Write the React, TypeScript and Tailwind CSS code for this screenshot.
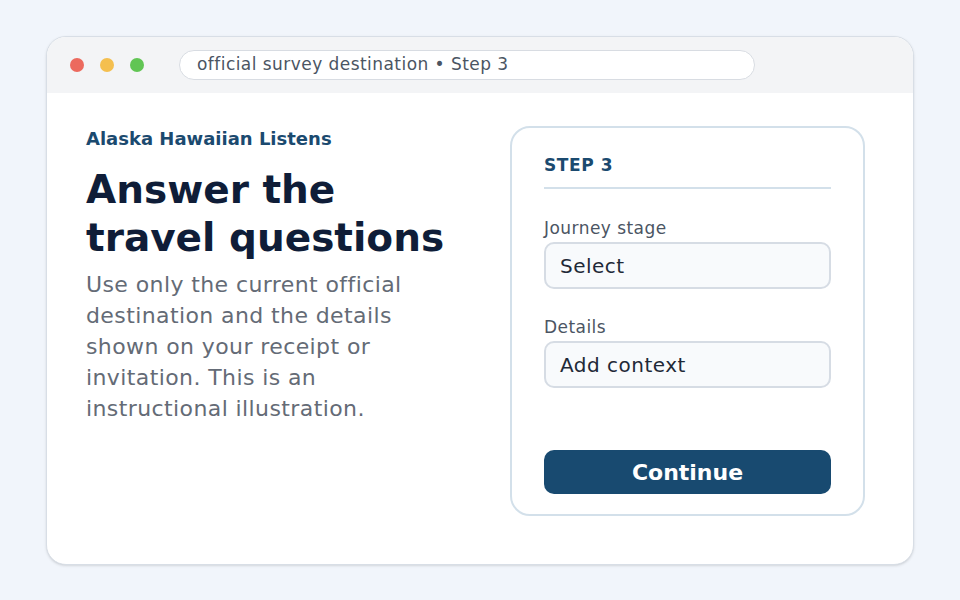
import { useState } from 'react';

const font = { fontFamily: '"DejaVu Sans", "Liberation Sans", sans-serif' };

function WindowDots() {
  return (
    <div className="flex items-center gap-4">
      <span className="h-3.5 w-3.5 rounded-full bg-[#ec6a5e]" />
      <span className="h-3.5 w-3.5 rounded-full bg-[#f4bf4f]" />
      <span className="h-3.5 w-3.5 rounded-full bg-[#61c554]" />
    </div>
  );
}

function Field({ label, value }: { label: string; value: string }) {
  return (
    <div className="flex flex-col gap-[4px]">
      <label className="text-[17px] leading-5 tracking-[0.45px] text-[#4b5563]">{label}</label>
      <div className="flex h-[47px] items-center rounded-[10px] border-2 border-[#d6dce4] bg-[#f8fafc] px-[14px] pt-[1px] text-[20px] tracking-[0.5px] text-[#1f2937]">
        {value}
      </div>
    </div>
  );
}

export default function App() {
  const [step] = useState(3);

  return (
    <div className="min-h-screen bg-[#f1f5fb] px-[46px] pt-9" style={font}>
      <div className="h-[529px] overflow-hidden rounded-[20px] border border-[#d8dee6] bg-white shadow-sm">
        {/* Title bar */}
        <div className="flex h-14 items-center gap-[35px] bg-[#f3f4f6] pl-[23px]">
          <WindowDots />
          <div className="flex h-[30px] w-[576px] items-center rounded-full border border-[#d8dce2] bg-white px-[17px] text-[17px] tracking-[0.45px] text-[#4b5563]">
            official survey destination • Step {step}
          </div>
        </div>

        {/* Body */}
        <div className="flex justify-between pl-[39px] pr-[48px] pt-[33px]">
          <div className="w-[370px]">
            <p className="mt-[1px] text-[18px] font-bold leading-6 text-[#1b4a6f]">Alaska Hawaiian Listens</p>
            <h1 className="mt-[15px] text-[39px] font-bold leading-[48px] text-[#0f1d38]">
              Answer the travel questions
            </h1>
            <p className="mt-[7px] w-[360px] text-[22px] leading-[31px] tracking-[0.4px] text-[#646b76]">
              Use only the current official destination and the details shown on your receipt or
              invitation. This is an instructional illustration.
            </p>
          </div>

          <div className="flex h-[390px] w-[355px] flex-col rounded-[20px] border-2 border-[#d3e0ea] px-[32px] pt-[27px]">
            <div className="border-b-2 border-[#d3e0ea] pb-[12px] text-[17px] font-bold leading-5 tracking-[0.6px] text-[#1b4a6f]">
              STEP {step}
            </div>
            <div className="mt-[29px] flex flex-col gap-[28px]">
              <Field label="Journey stage" value="Select" />
              <Field label="Details" value="Add context" />
            </div>
            <button className="mt-[62px] h-[44px] rounded-[10px] bg-[#184a70] text-[22px] font-bold text-white">
              Continue
            </button>
          </div>
        </div>
      </div>
    </div>
  );
}
